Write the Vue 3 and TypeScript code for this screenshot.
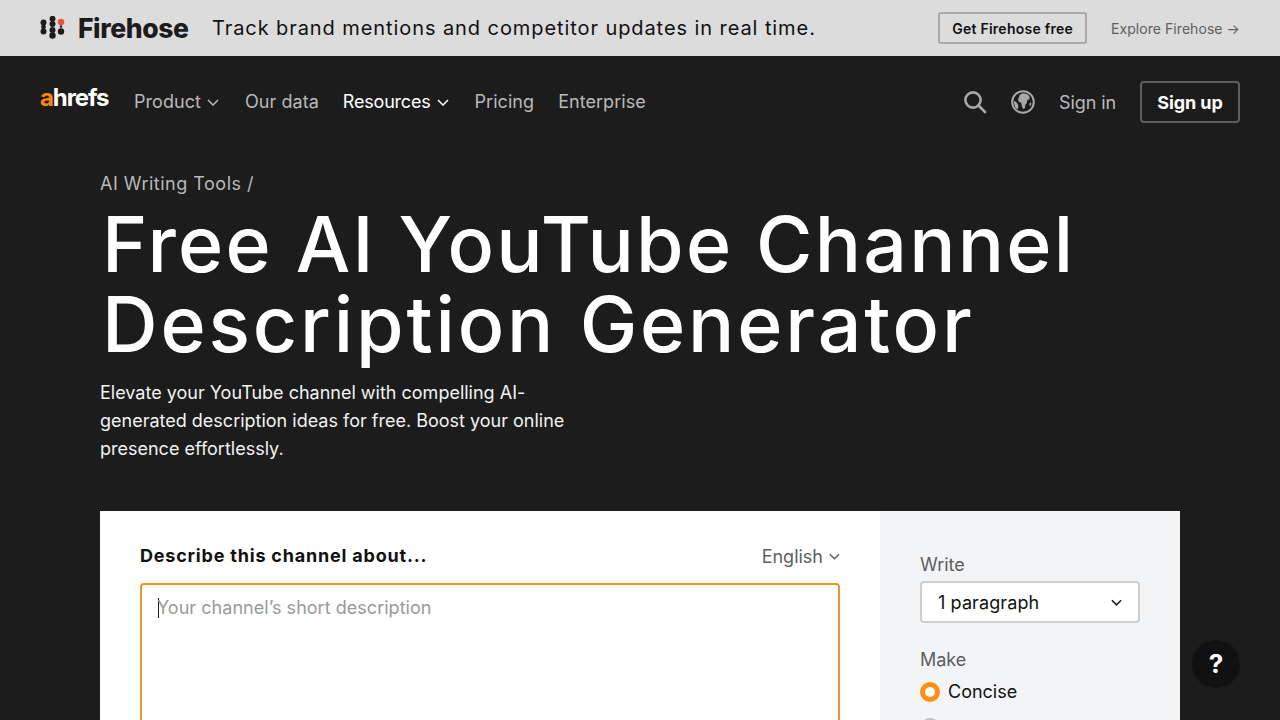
<script setup lang="ts">
const links = [
  { label: 'Product', caret: true, active: false },
  { label: 'Our data', caret: false, active: false },
  { label: 'Resources', caret: true, active: true },
  { label: 'Pricing', caret: false, active: false },
  { label: 'Enterprise', caret: false, active: false },
]
</script>

<template>
  <div class="page">
    <div class="promo">
      <div class="brand">
        <svg class="fh-mark" width="25" height="24" viewBox="0 0 25 24">
          <g fill="#1c1c1c">
            <circle cx="3.5" cy="6.5" r="3" /><circle cx="3.5" cy="11" r="2.4" /><circle cx="3.5" cy="15.5" r="3" />
            <circle cx="12.5" cy="2.8" r="3" /><circle cx="12.5" cy="8" r="3" /><circle cx="12.5" cy="14" r="3" /><circle cx="12.5" cy="19.5" r="3.2" />
            <circle cx="21" cy="15.5" r="3.2" /><circle cx="21" cy="10.5" r="1.2" />
          </g>
          <circle cx="21" cy="6" r="3.3" fill="#f4503c" />
        </svg>
        <span class="fh-name">Firehose</span>
      </div>
      <p class="promo-text">Track brand mentions and competitor updates in real time.</p>
      <a class="promo-btn">Get Firehose free</a>
      <a class="promo-link">Explore Firehose →</a>
    </div>

    <header class="nav">
      <a class="logo"><span class="logo-a">a</span>hrefs</a>
      <nav class="links">
        <a v-for="l in links" :key="l.label" class="link" :class="{ active: l.active }">
          {{ l.label }}
          <svg v-if="l.caret" width="12" height="7" viewBox="0 0 12 7" fill="none" stroke="currentColor" stroke-width="1.5"><path d="M1 1l5 5 5-5" /></svg>
        </a>
      </nav>
      <div class="nav-right">
        <svg width="24" height="24" viewBox="0 0 24 24" fill="none" stroke="#a8a8a8" stroke-width="2.6"><circle cx="10" cy="10" r="7.6" /><path d="M15.5 15.5l6.5 6.5" stroke-linecap="round" /></svg>
        <svg class="globe" width="24" height="24" viewBox="0 0 24 24">
          <circle cx="12" cy="12" r="10.8" fill="none" stroke="#a8a8a8" stroke-width="2" />
          <path fill="#a8a8a8" d="M9 4.5l3-1.2 4 .6 2.2 2.2.6 3-2.4 1-.6 3-1.4 1.6-.6 3.6-1.8.8-1.2-3.4-.6-3-2-.6-1.2-2.2 1-3zM2.6 11l2.4.8 2 2.6.4 2.6-1 2.4-2.2-2.2-1-3.2zM18.6 13l1.4-.6.4 1.6-1.2 2.2-.8-1.2z" />
        </svg>
        <a class="signin">Sign in</a>
        <a class="signup">Sign up</a>
      </div>
    </header>

    <main class="main">
      <div class="crumb">AI Writing Tools /</div>
      <h1 class="title"><span class="line-one">Free AI YouTube Channel</span><span class="line-two">Description Generator</span></h1>
      <p class="lead">Elevate your YouTube channel with compelling AI-generated description ideas for free. Boost your online presence effortlessly.</p>

      <section class="card">
        <div class="card-main">
          <div class="card-head">
            <label class="prompt">Describe this channel about...</label>
            <span class="lang">English
              <svg width="11" height="7" viewBox="0 0 12 7" fill="none" stroke="currentColor" stroke-width="1.5"><path d="M1 1l5 5 5-5" /></svg>
            </span>
          </div>
          <div class="input"><i class="caret"></i><span class="placeholder">Your channel’s short description</span></div>
        </div>
        <aside class="side">
          <div class="side-label">Write</div>
          <div class="select">1 paragraph
            <svg width="11" height="7" viewBox="0 0 12 7" fill="none" stroke="#1c1c1c" stroke-width="1.7"><path d="M1 1l5 5 5-5" /></svg>
          </div>
          <div class="side-label make">Make</div>
          <div class="radio-row"><i class="radio on"></i>Concise</div>
          <div class="radio-row second"><i class="radio"></i></div>
        </aside>
      </section>
    </main>

    <button class="help">?</button>
  </div>
</template>

<style>
html, body { margin: 0; overflow: hidden; background: #1c1c1c; }
</style>

<style scoped>
.page { height: 720px; overflow: hidden; background: #1c1c1c; font-family: Inter, "Liberation Sans", sans-serif; color: #fff; }
a { cursor: pointer; }
.promo { height: 56px; box-sizing: border-box; background: #dcdcdc; padding: 0 40px; display: flex; align-items: center; color: #111; }
.brand { display: flex; align-items: center; gap: 13px; width: 172px; }
.fh-mark { flex: none; }
.fh-name { font: 800 26.5px/1 Inter, sans-serif; letter-spacing: -0.4px; color: #1c1c1c; }
.promo-text { margin: 0; font-size: 20px; letter-spacing: 0.92px; flex: 1; color: #111; }
.promo-btn { box-sizing: border-box; height: 32px; display: flex; align-items: center; padding: 0 12px; border: 2px solid #a9a9a9; border-radius: 3px; font-size: 14px; font-weight: 600; letter-spacing: 0.25px; color: #111; }
.promo-link { margin-left: 24px; font-size: 14px; letter-spacing: 0.06px; color: #5e5e5e; }

.nav { height: 90px; box-sizing: border-box; padding: 0 40px; display: flex; align-items: center; }
.logo { width: 94px; font: 700 24px/1 Inter, sans-serif; letter-spacing: -1.1px; color: #fff; margin-top: -7px; }
.logo-a { color: #ff8800; }
.links { display: flex; gap: 24px; }
.link { display: flex; align-items: center; gap: 6px; font-size: 18px; letter-spacing: 0.05px; color: #b9b9b9; }
.link svg { margin-right: 2px; margin-top: 2px; }
.link.active { color: #fff; letter-spacing: -0.2px; }
.nav-right { margin-left: auto; margin-top: 2px; display: flex; align-items: center; }
.globe { margin-left: 24px; }
.signin { margin-left: 24px; font-size: 18px; letter-spacing: -0.1px; color: #b9b9b9; padding-top: 1px; }
.signup { margin-left: 24px; box-sizing: border-box; width: 100px; height: 42px; display: flex; align-items: center; justify-content: center; border: 2px solid #5e5e5e; border-radius: 4px; font-size: 18px; font-weight: 700; letter-spacing: -0.1px; }

.main { padding: 0 100px; }
.crumb { margin-top: 26px; font-size: 18px; line-height: 24px; letter-spacing: 0.5px; color: #b9b9b9; }
.title { margin: 8px 0 0 2px; font-size: 77px; line-height: 80px; font-weight: 450; color: #fff; }
.line-one, .line-two { display: block; }
.line-one { letter-spacing: 2.2px; }
.line-two { letter-spacing: 2.85px; }
.lead { margin: 15px 0 0; width: 480px; font-size: 18px; line-height: 28px; color: #f2f2f2; }

.card { margin-top: 48px; width: 1080px; display: flex; background: #fff; height: 400px; color: #111; }
.card-main { width: 780px; box-sizing: border-box; padding: 32px 40px; }
.card-head { display: flex; justify-content: space-between; align-items: center; height: 26px; }
.prompt { font-size: 18px; font-weight: 700; letter-spacing: 0.8px; color: #111; margin-top: -2px; }
.lang { display: flex; align-items: center; gap: 6px; font-size: 18px; margin-left: -1px; color: #5e5e5e; }
.input { margin-top: 14px; height: 300px; box-sizing: border-box; border: 2px solid #ea9a24; border-radius: 4px; padding: 12px 16px; display: flex; align-items: flex-start; }
.caret { width: 1px; height: 20px; background: #1c1c1c; margin: 1px -1px 0 0; flex: none; }
.placeholder { font-size: 18px; line-height: 22px; letter-spacing: 0.03px; color: #9a9a9a; margin-left: -1px; }
.side { width: 300px; box-sizing: border-box; background: #f2f4f6; padding: 41px 40px; }
.side-label { font-size: 18px; line-height: 26px; color: #5e5e5e; }
.select { box-sizing: border-box; margin-top: 3px; height: 42px; display: flex; align-items: center; justify-content: space-between; padding: 0 16px; background: #fff; border: 2px solid #cfcfcf; border-radius: 4px; font-size: 18px; letter-spacing: 0.1px; color: #111; }
.make { margin-top: 24px; }
.radio-row { display: flex; align-items: center; gap: 8px; font-size: 18px; line-height: 26px; margin-top: 6px; color: #111; }
.radio-row.second { margin-top: 13px; }
.radio { box-sizing: border-box; width: 20px; height: 20px; border-radius: 50%; border: 2px solid #bdbdbd; background: #fff; flex: none; }
.radio.on { border: 5px solid #ff8f0f; }
.help { position: fixed; right: 40px; bottom: 32px; width: 48px; height: 48px; padding: 0; border: 0; border-radius: 50%; background: #111; color: #fff; font: 700 26px/48px Inter, sans-serif; }
</style>
